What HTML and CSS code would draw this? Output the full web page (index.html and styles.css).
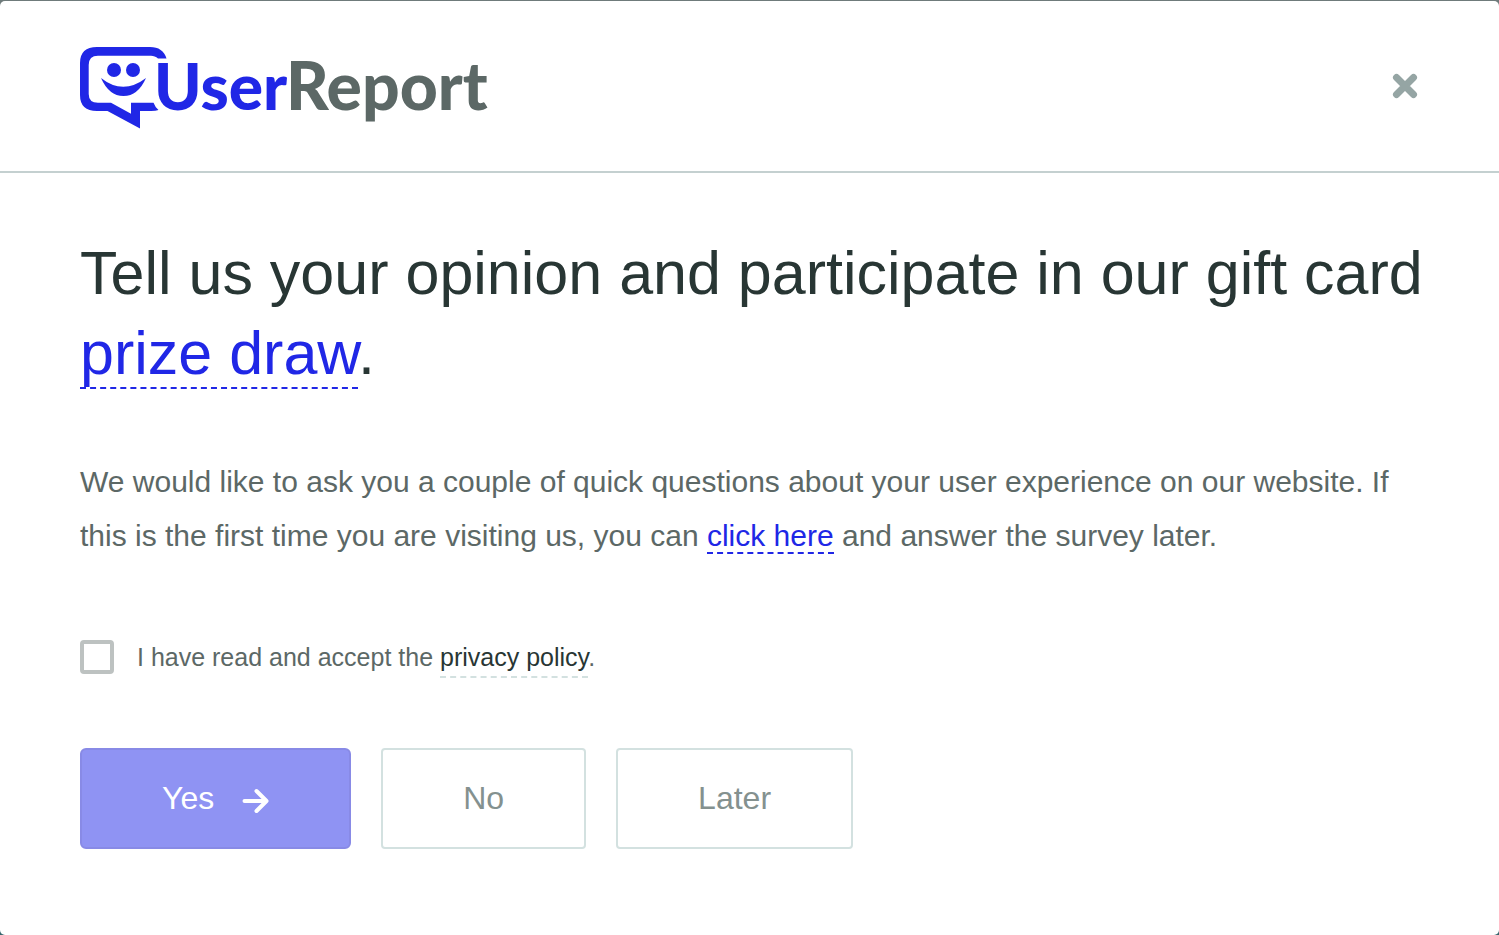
FILE: index.html
```html
<!DOCTYPE html>
<html lang="en">
<head>
<meta charset="utf-8">
<meta name="viewport" content="width=device-width, initial-scale=1">
<title>UserReport</title>
<link rel="stylesheet" href="styles.css">
</head>
<body>
<main class="dialog">
  <header class="header">
    <svg class="logo" viewBox="80 43 420 86" role="img" aria-label="UserReport">
      <path class="logo-bubble" d="M166.500 58.500H158C156 56.500 153.500 55.700 151 55.700H98Q88.700 55.700 88.700 65V94Q88.700 102.800 98 102.800H111L131 113.800V102.800H153.500Q155 107 158.500 110Q156 111 151 111H140V128.500L107.500 111H97Q80 111 80 95V63Q80 47 97 47H150Q163 47 166.500 58.500Z"/>
      <circle class="logo-bubble" cx="114" cy="70" r="7"/>
      <circle class="logo-bubble" cx="133" cy="70" r="7"/>
      <path class="logo-bubble" d="M101 78Q123 95.500 146 78Q138 96 123.500 96Q109 96 101 78Z"/>
      <text class="logo-text logo-user" x="154" y="110">User</text>
      <text class="logo-text logo-report" x="286" y="110">Report</text>
    </svg>
    <button class="close" type="button" aria-label="Close">
      <svg class="close-icon" viewBox="0 0 28 28" aria-hidden="true"><path d="M5.500 5.500L22.500 22.500M22.500 5.500L5.500 22.500"/></svg>
    </button>
  </header>
  <section class="content">
    <h1 class="title">Tell us your opinion and participate in our gift card <a class="link" href="#prize">prize draw</a>.</h1>
    <p class="intro">We would like to ask you a couple of quick questions about your user experience on our website. If this is the first time you are visiting us, you can <a class="link" href="#later">click here</a> and answer the survey later.</p>
    <div class="consent">
      <input class="checkbox" type="checkbox" id="accept">
      <label class="consent-label" for="accept">I have read and accept the <a class="policy" href="#privacy">privacy policy</a>.</label>
    </div>
    <div class="actions">
      <button class="button button-primary" type="button">Yes
        <svg class="arrow" viewBox="0 0 27 26" aria-hidden="true"><path d="M2.500 13H24M14.500 3L24.500 13L14.500 23"/></svg>
      </button>
      <button class="button" type="button">No</button>
      <button class="button" type="button">Later</button>
    </div>
  </section>
</main>
</body>
</html>
```
FILE: styles.css
```css
* { box-sizing: border-box; }

body {
  margin: 0;
  padding-top: 1px;
  min-height: 100vh;
  display: flex;
  background: linear-gradient(#6f7b7b, #35666c);
  font-family: "Liberation Sans", Arial, sans-serif;
  color: #5c6866;
}

.dialog {
  flex: 1;
  background: #fff;
  border-radius: 5px;
}

.header {
  display: flex;
  align-items: center;
  justify-content: space-between;
  padding: 42px 80px;
  border-bottom: 2px solid #c4d0d0;
}

.logo { width: 420px; height: 86px; }
.logo-bubble { fill: #2027e6; }
.logo-text { font-family: Lato, sans-serif; font-weight: 900; }
.logo-user { fill: #2027e6; font-size: 64px; }
.logo-report { fill: #5c6866; font-size: 66px; }

.close {
  display: flex;
  padding: 0;
  border: 0;
  background: none;
  cursor: pointer;
}

.close-icon {
  width: 28px;
  height: 28px;
  fill: none;
  stroke: #95a5a4;
  stroke-width: 7;
  stroke-linecap: round;
}

.content { padding: 60px 70px 60px 80px; }

.title {
  margin: 0 0 62px;
  font-size: 61px;
  font-weight: 400;
  line-height: 80px;
  color: #283634;
}

.link {
  color: #2027e6;
  text-decoration: none;
  border-bottom: 2px dashed #2027e6;
}

.intro {
  margin: 0 0 77px;
  font-size: 30px;
  line-height: 54px;
}

.consent {
  display: flex;
  align-items: center;
  gap: 23px;
  margin-bottom: 74px;
}

.checkbox {
  appearance: none;
  width: 34px;
  height: 34px;
  margin: 0;
  border: 4px solid #bdc2c1;
  border-radius: 4px;
  background: #fff;
}

.checkbox:checked { background: #2027e6; }

.consent-label { font-size: 25px; line-height: 34px; }

.policy {
  padding-bottom: 5px;
  color: #283634;
  text-decoration: none;
  border-bottom: 2px dashed #d3e1e0;
}

.actions { display: flex; flex-wrap: wrap; gap: 30px; }

.button {
  display: flex;
  align-items: center;
  gap: 28px;
  padding: 30px 80px;
  border: 2px solid #d3e1e0;
  border-radius: 4px;
  background: #fff;
  color: #84918f;
  font: 32px/37px "Liberation Sans", Arial, sans-serif;
  cursor: pointer;
}

.button-primary {
  border-color: #888ae6;
  border-radius: 6px;
  background: #8f93f3;
  color: #fff;
}

.arrow {
  width: 27px;
  height: 26px;
  margin-top: 5px;
  fill: none;
  stroke: currentColor;
  stroke-width: 4;
  stroke-linecap: round;
  stroke-linejoin: round;
}
```
